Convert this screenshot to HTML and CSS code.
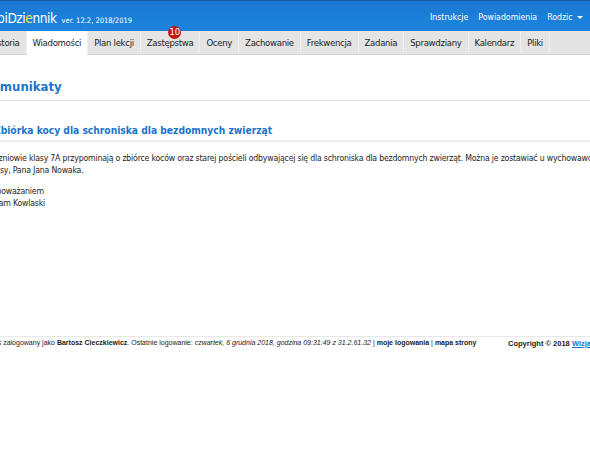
FILE: index.html
```html
<!DOCTYPE html>
<html lang="pl">
<head>
<meta charset="utf-8">
<title>MobiDziennik</title>
<link rel="stylesheet" href="styles.css">
</head>
<body>
<header class="top">
  <div class="logo"><span class="logo-name">MobiDzi<span class="logo-y">e</span>nnik</span><span class="ver">ver. 12.2, 2018/2019</span></div>
  <nav class="toplinks">
    <a href="#">Instrukcje</a>
    <a href="#">Powiadomienia</a>
    <a href="#" class="user">Rodzic <span class="caret"></span></a>
  </nav>
</header>
<nav class="menu">
  <a href="#">Historia</a>
  <a href="#" class="active">Wiadomości</a>
  <a href="#">Plan lekcji</a>
  <a href="#" class="has-badge">Zastępstwa<span class="badge">10</span></a>
  <a href="#">Oceny</a>
  <a href="#">Zachowanie</a>
  <a href="#">Frekwencja</a>
  <a href="#">Zadania</a>
  <a href="#">Sprawdziany</a>
  <a href="#">Kalendarz</a>
  <a href="#">Pliki</a>
</nav>
<main class="content">
  <h1 class="page-title">Komunikaty</h1>
  <h2 class="msg-title">Zbiórka kocy dla schroniska dla bezdomnych zwierząt</h2>
  <div class="msg-body">
    <p>Uczniowie klasy 7A przypominają o zbiórce koców oraz starej pościeli odbywającej się dla schroniska dla bezdomnych zwierząt. Można je zostawiać u wychowawcy klasy, Pana Jana Nowaka.</p>
    <p>Z poważaniem<br>Adam Kowlaski</p>
  </div>
</main>
<footer class="foot">
  <div class="foot-left">Jesteś zalogowany jako <b>Bartosz Cieczkiewicz</b>. Ostatnie logowanie: <i>czwartek, 6 grudnia 2018, godzina 09:31:49 z 31.2.61.32</i> | <b>moje logowania</b> | <b>mapa strony</b></div>
  <div class="foot-right"><b>Copyright © 2018 <a href="#">WizjaNet</a></b></div>
</footer>
</body>
</html>
```
FILE: styles.css
```css
html, body {
  margin: 0;
  padding: 0;
  overflow: hidden;
  width: 590px;
  height: 450px;
  background: #fff;
  font-family: "DejaVu Sans Condensed", "DejaVu Sans", sans-serif;
  color: #222;
}
a { text-decoration: none; color: inherit; }

.top {
  height: 31px;
  box-sizing: border-box;
  border-top: 1px solid #135ca8;
  background: linear-gradient(#1a78d2, #1d84de);
  display: flex;
  align-items: center;
  justify-content: space-between;
  color: #fff;
}
.logo {
  margin-left: -20px;
  display: flex;
  align-items: baseline;
  white-space: nowrap;
  margin-top: 3px;
}
.logo-name {
  font-family: "DejaVu Sans Condensed", sans-serif;
  font-size: 13.5px;
  letter-spacing: -0.4px;
}
.logo-y { color: #f4e04a; }
.ver {
  font-size: 7.5px;
  margin-left: 5px;
}
.toplinks {
  display: flex;
  gap: 10px;
  margin-right: 7px;
  font-size: 8.7px;
  margin-top: 2px;
}
.toplinks a { color: #fff; }
.caret {
  display: inline-block;
  width: 0; height: 0;
  border-left: 3px solid transparent;
  border-right: 3px solid transparent;
  border-top: 3px solid #fff;
  vertical-align: middle;
  margin-left: 2px;
}

.menu {
  display: flex;
  margin-left: -17px;
  height: 23px;
  background: #e4e4e4;
  border-bottom: 1px solid #d6d6d6;
  white-space: nowrap;
}
.menu a {
  position: relative;
  padding: 0 6px;
  font-size: 9.5px;
  letter-spacing: -0.3px;
  line-height: 24px;
  color: #222;
  border-right: 1px solid #f0f0f0;
}
.menu a.active {
  background: #fff;
  margin-bottom: -1px;
}
.badge {
  position: absolute;
  left: 27.5px;
  top: -5.5px;
  width: 13px;
  height: 13px;
  border-radius: 50%;
  background: #c4170f;
  color: #fff;
  font-size: 8.5px;
  letter-spacing: 0;
  line-height: 13px;
  text-align: center;
  font-family: "DejaVu Sans", sans-serif;
}

.content {
  margin-left: -16px;
  width: 620px;
}
.page-title {
  margin: 0 0 0 -1px;
  padding: 24px 0 6px 0;
  font-size: 13px;
  font-weight: bold;
  color: #1a74cc;
  border-bottom: 1px solid #e3e3e3;
}
.msg-title {
  margin: 24px 0 0 10px;
  padding: 0 0 4px 0;
  font-size: 10.2px;
  font-weight: bold;
  color: #1a74cc;
  border-bottom: 2px solid #eeeeee;
}
.msg-body {
  margin-left: 5px;
  font-size: 8.7px;
  letter-spacing: -0.2px;
  line-height: 12px;
  color: #1e1e1e;
}
.msg-body p { margin: 10px 0 0 0; }
.msg-body p + p { margin-top: 9px; }

.foot {
  margin-top: 127px;
  margin-left: -16px;
  width: 720px;
  border-top: 1px solid #e8e8e8;
  padding-top: 2px;
  display: flex;
  font-family: "Liberation Sans", sans-serif;
  font-size: 7px;
  white-space: nowrap;
}
.foot-left {
  flex: none;
  width: 527px;
  margin-left: -3px;
}
.foot-right { font-size: 7.5px; }
.foot-right a { color: #1a74cc; text-decoration: underline; }
```
